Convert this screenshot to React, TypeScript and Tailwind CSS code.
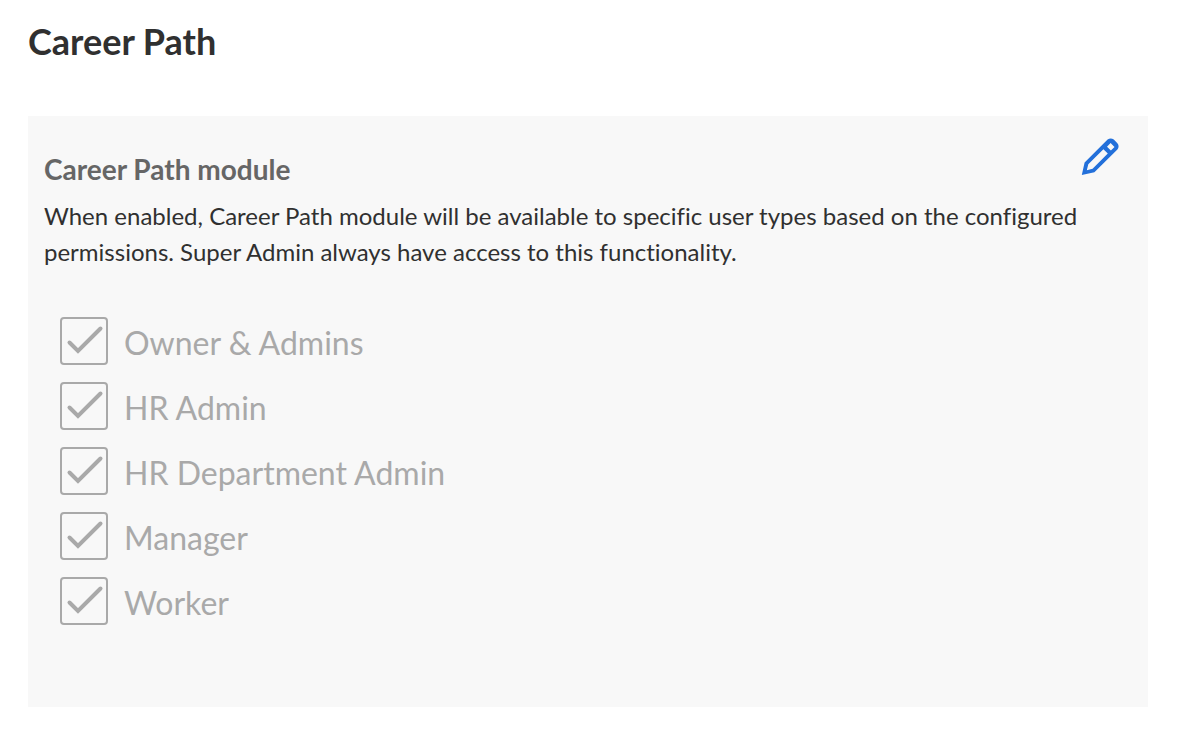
import { useState } from "react";

interface PermissionItemPropsType {
  item: {
    id: string;
    label: string;
    enabled: boolean;
  };
  disabled: boolean;
}

const permissions = [
  { id: "owner-admins", label: "Owner & Admins", enabled: true },
  { id: "hr-admin", label: "HR Admin", enabled: true },
  { id: "hr-department-admin", label: "HR Department Admin", enabled: true },
  { id: "manager", label: "Manager", enabled: true },
  { id: "worker", label: "Worker", enabled: true },
];

const PencilIcon = () => {
  return (
    <svg viewBox="0 0 40 40" className="h-10 w-10" fill="currentColor" fillRule="evenodd">
      <path d="M1.800 39L4.600 26.400L27.600 3.600Q30.700 1.200 33.800 3.600L37.400 7.200Q39.800 10.300 37.400 13.400L14.400 36.300ZM8.300 28.200L6.800 34.200L12.600 32.700L27.800 17.600L23.400 13.200ZM27 10.700L30.900 14.600L34.500 11L30.600 7.100Z" />
    </svg>
  );
};

const PermissionItem = (props: PermissionItemPropsType) => {
  const { item, disabled } = props;
  return (
    <li className="flex items-center gap-4">
      <span className="grid h-12 w-12 shrink-0">
        <input
          id={item.id}
          type="checkbox"
          defaultChecked={item.enabled}
          disabled={disabled}
          className="peer col-start-1 row-start-1 h-12 w-12 appearance-none rounded-sm border-2 border-[#a9a9a9]"
        />
        <svg
          viewBox="0 0 48 48"
          fill="none"
          stroke="#a9a9a9"
          strokeWidth="4"
          strokeLinecap="round"
          className="pointer-events-none invisible col-start-1 row-start-1 h-12 w-12 peer-checked:visible"
        >
          <path d="M9.500 25.500l8.500 8.500L40.500 11.500" />
        </svg>
      </span>
      <label htmlFor={item.id} className="pt-1 text-[32px] leading-[44px] text-[#a9a9a9]">
        {item.label}
      </label>
    </li>
  );
};

const App = () => {
  const [editing, setEditing] = useState(false);
  return (
    <main className="min-h-screen bg-white pt-5 pr-[49px] pb-10 pl-7 font-['Lato',sans-serif] text-[#303030]">
      <h1 className="text-4xl leading-[42px] font-bold">Career Path</h1>
      <section className="mt-[54px] bg-[#f8f8f8] px-4 pt-5 pb-[82px]">
        <div className="flex items-start justify-between pr-3">
          <h2 className="pt-4 text-[28px] leading-[34px] font-bold text-[#666666]">Career Path module</h2>
          <button
            type="button"
            aria-label="Edit"
            onClick={() => setEditing(!editing)}
            className="text-[#2370da]"
          >
            <PencilIcon />
          </button>
        </div>
        <p className="mt-3 text-2xl leading-9 [font-variant-ligatures:none]">
          When enabled, Career Path module will be available to specific user types based on the configured
          permissions. Super Admin always have access to this functionality.
        </p>
        <ul className="mt-[47px] flex flex-col gap-[17px] px-4">
          {permissions.map((item) => (
            <PermissionItem key={item.id} item={item} disabled={!editing} />
          ))}
        </ul>
      </section>
    </main>
  );
};

export default App;
